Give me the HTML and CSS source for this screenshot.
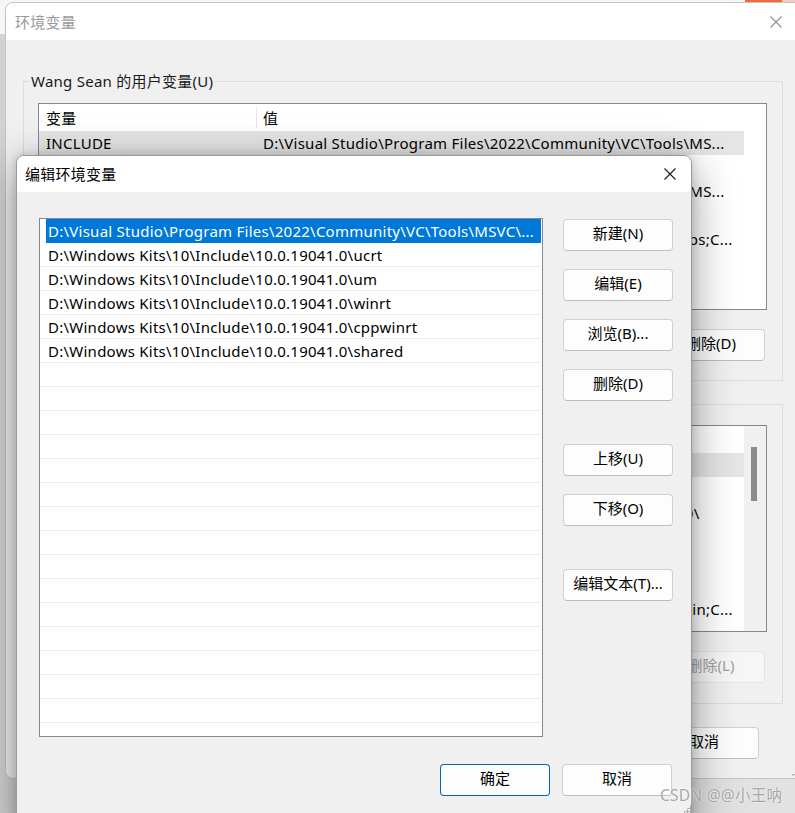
FILE: index.html
```html
<!DOCTYPE html>
<html lang="zh-CN">
<head>
<meta charset="utf-8">
<title>编辑环境变量</title>
<link rel="stylesheet" href="styles.css">
</head>
<body>
<div class="desk-strip"></div>

<section class="win bg-win">
  <header class="titlebar">
    <span class="title">环境变量</span>
    <span class="close"><svg width="12" height="12" viewBox="0 0 12 12"><path d="M0.5 0.5 L11.5 11.5 M11.5 0.5 L0.5 11.5" stroke="#8f8f8f" stroke-width="1.1" fill="none"/></svg></span>
  </header>
  <div class="win-body">
    <fieldset class="group g1">
      <legend>Wang Sean 的用户变量(U)</legend>
      <div class="listview">
        <div class="lv-cols">
          <div class="lv-head"><span class="c1">变量</span><span class="c2">值</span></div>
          <div class="lv-row hl"><span class="c1">INCLUDE</span><span class="c2">D:\Visual Studio\Program Files\2022\Community\VC\Tools\MS...</span></div>
          <div class="lv-row"><span class="c1">IntelliJ IDEA</span><span class="c2">D:\IntelliJ IDEA 2021.3\bin;</span></div>
          <div class="lv-row"><span class="c1">LIB</span><span class="c2">D:\Visual Studio\Program Files\2022\Community\VC\Tools\MS...</span></div>
          <div class="lv-row"><span class="c1">OneDrive</span><span class="c2">C:\Users\Wang Sean\OneDrive</span></div>
          <div class="lv-row"><span class="c1">Path</span><span class="c2">C:\Users\Wang Sean\AppData\Local\Microsoft\WindowsApps;C...</span></div>
          <div class="lv-row"><span class="c1">TEMP</span><span class="c2">C:\Users\Wang Sean\AppData\Local\Temp</span></div>
          <div class="lv-row"><span class="c1">TMP</span><span class="c2">C:\Users\Wang Sean\AppData\Local\Temp</span></div>
        </div>
      </div>
      <div class="group-btns">
        <button class="btn wg">新建(N)...</button>
        <button class="btn wg">编辑(E)...</button>
        <button class="btn wg">删除(D)</button>
      </div>
    </fieldset>

    <fieldset class="group g2">
      <legend>系统变量(S)</legend>
      <div class="listview">
        <div class="lv-cols">
          <div class="lv-head"><span class="c1">变量</span><span class="c2">值</span></div>
          <div class="lv-row hl"><span class="c1">ComSpec</span><span class="c2">C:\Windows\system32\cmd.exe</span></div>
          <div class="lv-row"><span class="c1">DriverData</span><span class="c2">C:\Windows\System32\Drivers\DriverData</span></div>
          <div class="lv-row"><span class="c1">CUDA_PATH</span><span class="c2">C:\Program Files\NVIDIA GPU Computing Toolkit\CUDA\v10\</span></div>
          <div class="lv-row"><span class="c1">NUMBER_OF_PROCESSORS</span><span class="c2">16</span></div>
          <div class="lv-row"><span class="c1">OS</span><span class="c2">Windows_NT</span></div>
          <div class="lv-row"><span class="c1">PATHEXT</span><span class="c2">.COM;.EXE;.BAT;.CMD;.VBS;.VBE;.JS</span></div>
          <div class="lv-row"><span class="c1">Path</span><span class="c2">C:\Program Files\NVIDIA GPU Computing Toolkit\CUDA\1\bin;C...</span></div>
          <div class="lv-row"><span class="c1">PROCESSOR_ARCHITECTURE</span><span class="c2">AMD64</span></div>
        </div>
        <div class="vscroll"><div class="thumb"></div></div>
      </div>
      <div class="group-btns">
        <button class="btn wg">新建(W)...</button>
        <button class="btn wg">编辑(I)...</button>
        <button class="btn wg disabled">删除(L)</button>
      </div>
    </fieldset>

    <div class="win-foot">
      <button class="btn wf">确定</button>
      <button class="btn wf">取消</button>
    </div>
  </div>
  <span class="grip bg-grip"></span>
</section>

<section class="win dlg">
  <header class="titlebar">
    <span class="title">编辑环境变量</span>
    <span class="close"><svg width="12" height="12" viewBox="0 0 12 12"><path d="M0.5 0.5 L11.5 11.5 M11.5 0.5 L0.5 11.5" stroke="#1a1a1a" stroke-width="1.1" fill="none"/></svg></span>
  </header>
  <div class="dlg-body">
    <div class="dlg-main">
      <div class="pathlist">
        <div class="p-row sel"><span>D:\Visual Studio\Program Files\2022\Community\VC\Tools\MSVC\...</span></div>
        <div class="p-row"><span>D:\Windows Kits\10\Include\10.0.19041.0\ucrt</span></div>
        <div class="p-row"><span>D:\Windows Kits\10\Include\10.0.19041.0\um</span></div>
        <div class="p-row"><span>D:\Windows Kits\10\Include\10.0.19041.0\winrt</span></div>
        <div class="p-row"><span>D:\Windows Kits\10\Include\10.0.19041.0\cppwinrt</span></div>
        <div class="p-row"><span>D:\Windows Kits\10\Include\10.0.19041.0\shared</span></div>
        <div class="p-row"></div><div class="p-row"></div><div class="p-row"></div><div class="p-row"></div>
        <div class="p-row"></div><div class="p-row"></div><div class="p-row"></div><div class="p-row"></div>
        <div class="p-row"></div><div class="p-row"></div><div class="p-row"></div><div class="p-row"></div>
        <div class="p-row"></div><div class="p-row"></div><div class="p-row"></div><div class="p-row"></div>
      </div>
      <div class="side-btns">
        <button class="btn">新建(N)</button>
        <button class="btn">编辑(E)</button>
        <button class="btn">浏览(B)...</button>
        <button class="btn">删除(D)</button>
        <button class="btn sep">上移(U)</button>
        <button class="btn">下移(O)</button>
        <button class="btn sep">编辑文本(T)...</button>
      </div>
    </div>
    <div class="dlg-foot">
      <button class="btn primary">确定</button>
      <button class="btn">取消</button>
    </div>
  </div>
  <span class="grip dlg-grip"></span>
</section>

<div class="watermark">CSDN @@小王呐</div>
</body>
</html>
```

FILE: styles.css
```css
* { box-sizing: border-box; }
html, body { margin: 0; padding: 0; }
body {
  width: 795px;
  height: 813px;
  overflow: hidden;
  position: relative;
  background: linear-gradient(90deg, #d2d2d2, #e2e2e2);
  font-family: "Noto Sans", "Noto Sans CJK SC", sans-serif;
  font-size: 15px;
  letter-spacing: 0.25px;
  color: #000;
}
.desk-strip {
  position: absolute;
  left: 0; top: 0;
  width: 795px; height: 34px;
  background: linear-gradient(90deg, #f6f6f6 0 745px, #ec6a3c 745px 782px, #f4cdb8 782px);
}

.win {
  position: absolute;
  background: #f0f0f0;
  border-radius: 8px;
  overflow: hidden;
}
.titlebar {
  display: flex;
  align-items: center;
  background: #fff;
}
.title { line-height: 20px; }
.close {
  margin-left: auto;
  display: flex;
  align-items: center;
  justify-content: center;
}

/* background window */
.bg-win {
  left: 5px; top: 2px;
  width: 800px; height: 777px;
  border: 1px solid #c4c4c4;
}
.bg-win .titlebar { height: 37px; padding-left: 9px; }
.bg-win .title { color: #9a9a9a; }
.bg-win .close { width: 46px; margin-right: 5px; }
.win-body { padding: 0 0 0 17px; }

.group {
  margin: 0;
  width: 760px;
  min-width: 0;
  border: 1px solid #dcdcdc;
  padding: 0 0 19px 0;
}
.group legend {
  padding: 0 2px;
  margin-left: 5px;
  line-height: 20px;
  color: #1a1a1a;
}
.g1 { margin-top: 31px; }
.g2 { margin-top: 13px; padding-bottom: 20px; }

.listview {
  margin: 12px 0 0 14px;
  width: 729px;
  height: 207px;
  border: 1px solid #828790;
  background: #fff;
  display: flex;
  overflow: hidden;
}
.g2 .listview { margin-top: 11px; }
.lv-cols { width: 705px; flex: none; }
.lv-head, .lv-row {
  display: flex;
  white-space: nowrap;
}
.lv-head { height: 27px; align-items: center; }
.lv-row { height: 24px; align-items: center; }
.lv-row.hl { background: #e5e5e5; }
.c1 { width: 217px; flex: none; padding-left: 7px; overflow: hidden; }
.c2 { flex: 1; padding-left: 7px; overflow: hidden; }
.lv-head .c2 { border-left: 1px solid #e5e5e5; padding-left: 6px; }

.vscroll {
  margin-left: auto;
  width: 22px;
  background: #f0f0f0;
  position: relative;
}
.vscroll .thumb {
  position: absolute;
  left: 7px; top: 21px;
  width: 6px; height: 54px;
  background: #8a8a8a;
}

.group-btns {
  margin-top: 19px;
  padding-right: 15px;
  display: flex;
  justify-content: flex-end;
  gap: 10px;
  margin-right: 2px;
}

.win-foot {
  margin-top: 23px;
  width: 760px;
  display: flex;
  justify-content: flex-end;
  gap: 10px;
  padding-right: 24px;
}

.btn {
  font: inherit;
  font-size: 15px;
  color: #000;
  height: 32px;
  padding: 0 0 4px;
  background: #fdfdfd;
  border: 1px solid #d0d0d0;
  border-bottom-color: #bdbdbd;
  border-radius: 4px;
  text-align: center;
  line-height: 20px;
}
.wg { width: 108px; }
.wf { width: 110px; }
.btn.disabled { color: #a0a0a0; background: #f6f6f6; border-color: #e4e4e4; }

/* front dialog */
.dlg {
  left: 16px; top: 155px;
  width: 676px; height: 680px;
  border: 1px solid #9a9a9a;
  box-shadow: 0 10px 44px rgba(0, 0, 0, 0.4), 0 0 10px rgba(0, 0, 0, 0.15);
}
.dlg .titlebar { height: 36px; padding-left: 8px; }
.dlg .close { width: 42px; }
.dlg-body { padding: 26px 18px 0 22px; }
.dlg-main { display: flex; gap: 20px; }

.pathlist {
  width: 504px;
  height: 519px;
  border: 1px solid #828790;
  background: #fff;
  overflow: hidden;
}
.p-row {
  height: 24px;
  border-bottom: 1px solid #ececec;
  margin: 0 1px;
  display: flex;
  align-items: center;
  white-space: nowrap;
  overflow: hidden;
}
.p-row span { padding-left: 7px; }
.p-row.sel { border-bottom: none; }
.p-row.sel span {
  margin-left: 5px;
  padding-left: 2px;
  background: #0078d7;
  color: #fff;
  height: 24px;
  line-height: 24px;
  flex: 1;
}

.side-btns {
  width: 110px;
  padding-top: 1px;
  display: flex;
  flex-direction: column;
  gap: 18px;
}
.side-btns .btn { width: 110px; }
.side-btns .sep { margin-top: 25px; }

.dlg-foot {
  margin-top: 27px;
  display: flex;
  justify-content: flex-end;
  gap: 12px;
  padding-right: 1px;
}
.dlg-foot .btn { width: 110px; }
.btn.primary { border: 1px solid #0067c0; border-bottom-color: #0060b0; }

.grip {
  position: absolute;
  width: 9px; height: 9px;
  background:
    radial-gradient(circle, #b0b0b0 1px, transparent 1.2px) 0 0 / 3px 3px;
  clip-path: polygon(100% 0, 100% 100%, 0 100%);
}
.bg-grip { right: 4px; bottom: 2px; }
.dlg-grip { left: 666px; top: 648px; }

.watermark {
  position: absolute;
  left: 660px; top: 785px;
  font-size: 15.5px;
  line-height: 20px;
  color: rgba(140, 140, 140, 0.75);
  text-shadow: 0 0 2px rgba(255, 255, 255, 0.9);
  white-space: nowrap;
}
```
